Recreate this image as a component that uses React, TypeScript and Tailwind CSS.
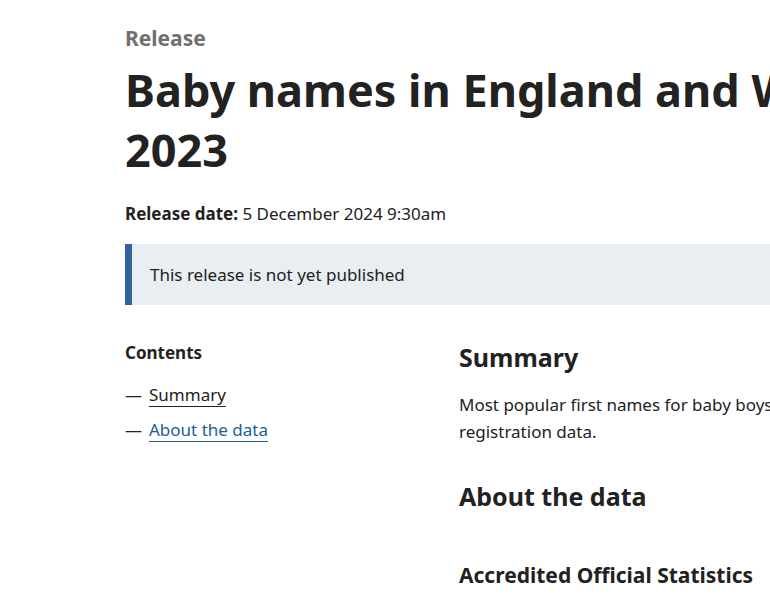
export default function App() {
  return (
    <div
      className="w-[770px] h-[600px] overflow-hidden bg-white text-[#222222]"
      style={{ fontFamily: '"Noto Sans", "Open Sans", sans-serif' }}
    >
      <div className="ml-[125px] w-[1160px] pt-[26px]">
        <p className="text-[21px] leading-[24px] font-bold text-[#707071]">Release</p>
        <h1 className="mt-[10px] w-[880px] text-[45px] leading-[60px] font-bold">
          Baby names in England and Wales: 2023
        </h1>
        <p className="mt-[22px] text-[17px] leading-[24px]">
          <span className="font-bold">Release date:</span> 5 December 2024 9:30am
        </p>
        <div className="mt-[18px] flex bg-[#e9eef3]">
          <div className="w-[7px] bg-[#33639a]" />
          <p className="px-[18px] py-[18px] text-[17px] leading-[25px]">This release is not yet published</p>
        </div>
        <div className="mt-[36px] grid grid-cols-[334px_820px]">
          <nav>
            <h2 className="text-[17px] leading-[24px] font-bold">Contents</h2>
            <ul className="mt-[18px] flex flex-col gap-[11px] text-[17px] leading-[24px]">
              <li className="flex gap-[7px]">
                <span className="text-[#222222]">—</span>
                <a href="#summary" className="underline underline-offset-[5px] decoration-1">Summary</a>
              </li>
              <li className="flex gap-[7px]">
                <span className="text-[#222222]">—</span>
                <a href="#about" className="text-[#206095] underline underline-offset-[5px] decoration-1">
                  About the data
                </a>
              </li>
            </ul>
          </nav>
          <main>
            <h2 id="summary" className="text-[25px] leading-[32px] font-bold">Summary</h2>
            <p className="mt-[18px] text-[17px] leading-[27px]">
              Most popular first names for baby boys and baby girls born in England and Wales, based on birth
              registration data.
            </p>
            <h2 id="about" className="mt-[35px] text-[25px] leading-[32px] font-bold">About the data</h2>
            <h3 className="mt-[49px] text-[21px] leading-[28px] font-bold">Accredited Official Statistics</h3>
          </main>
        </div>
      </div>
    </div>
  );
}
